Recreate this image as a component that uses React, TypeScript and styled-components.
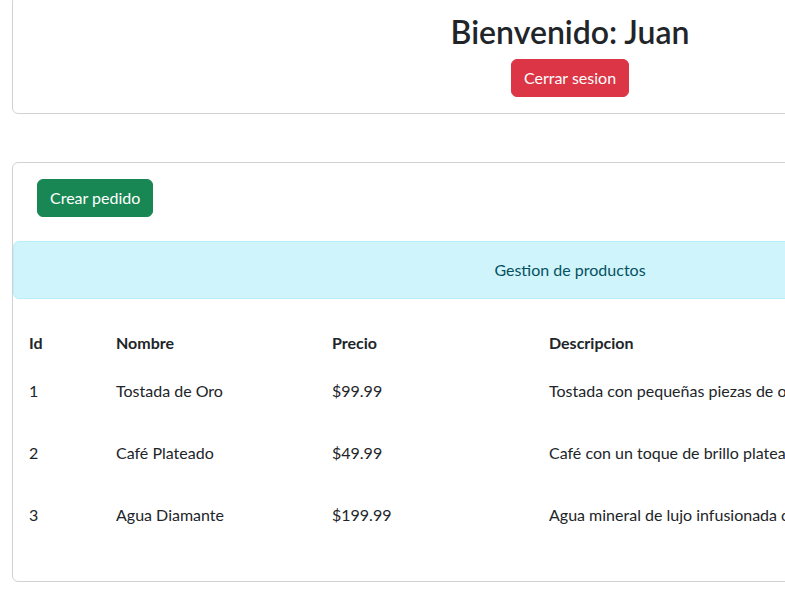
import styled, { createGlobalStyle } from "styled-components";

const GlobalStyle = createGlobalStyle`
  html, body {
    margin: 0;
    padding: 0;
    overflow: hidden;
    background: #fff;
  }
  body {
    font-family: Lato, "Noto Sans", sans-serif;
    font-size: 16px;
    line-height: 1.5;
    color: #212529;
  }
`;

interface Producto {
  id: number;
  nombre: string;
  precio: string;
  descripcion: string;
}

const productos: Producto[] = [
  { id: 1, nombre: "Tostada de Oro", precio: "$99.99", descripcion: "Tostada con pequeñas piezas de oro comestible" },
  { id: 2, nombre: "Café Plateado", precio: "$49.99", descripcion: "Café con un toque de brillo plateado comestible" },
  { id: 3, nombre: "Agua Diamante", precio: "$199.99", descripcion: "Agua mineral de lujo infusionada con diamantes" }
];

export default function App() {
  return (
    <>
      <GlobalStyle />
      <Pagina>
        <CardBienvenida>
          <Titulo>Bienvenido: Juan</Titulo>
          <Boton $color="#dc3545">Cerrar sesion</Boton>
        </CardBienvenida>

        <CardProductos>
          <BarraAcciones>
            <Boton $color="#198754">Crear pedido</Boton>
          </BarraAcciones>
          <Alerta>Gestion de productos</Alerta>
          <Tabla>
            <FilaCabecera>
              <Celda>Id</Celda>
              <Celda>Nombre</Celda>
              <Celda>Precio</Celda>
              <Celda>Descripcion</Celda>
            </FilaCabecera>
            {productos.map((item) => {
              return (
                <Fila key={item.id}>
                  <Celda>{item.id}</Celda>
                  <Celda>{item.nombre}</Celda>
                  <Celda>{item.precio}</Celda>
                  <Celda>{item.descripcion}</Celda>
                </Fila>
              );
            })}
          </Tabla>
        </CardProductos>
      </Pagina>
    </>
  );
}

// la pagina esta desplazada un poco hacia abajo en la captura
const Pagina = styled.div`
  width: 1116px;
  margin: -4px 0 0 12px;
  display: flex;
  flex-direction: column;
  gap: 48px;
`;

const Card = styled.div`
  border: 1px solid #d2d2d2;
  border-radius: 6px;
  background: #fff;
`;

const CardBienvenida = styled(Card)`
  display: flex;
  flex-direction: column;
  align-items: center;
  padding: 16px;
`;

const Titulo = styled.h2`
  margin: 0 0 8px;
  font-size: 32px;
  font-weight: 600;
  line-height: 1.2;
`;

const Boton = styled.button<{ $color: string }>`
  font-family: inherit;
  font-size: 16px;
  line-height: 24px;
  padding: 6px 12px;
  color: #fff;
  background: ${(p) => p.$color};
  border: 1px solid ${(p) => p.$color};
  border-radius: 6px;
  cursor: pointer;
`;

const CardProductos = styled(Card)`
  display: flex;
  flex-direction: column;
`;

const BarraAcciones = styled.div`
  display: flex;
  padding: 16px 24px 24px;
`;

const Alerta = styled.div`
  padding: 16px;
  text-align: center;
  color: #055160;
  background: #cff4fc;
  border: 1px solid #b6effb;
  border-radius: 6px;
`;

const Tabla = styled.div`
  display: flex;
  flex-direction: column;
  padding: 32px 16px 16px;
`;

const FilaBase = styled.div`
  display: grid;
  grid-template-columns: 87px 216px 217px 1fr;
  align-items: start;
  white-space: nowrap;
`;

const FilaCabecera = styled(FilaBase)`
  height: 48px;
  font-weight: 700;
`;

const Fila = styled(FilaBase)`
  height: 62px;
`;

const Celda = styled.div`
  line-height: 24px;
`;
